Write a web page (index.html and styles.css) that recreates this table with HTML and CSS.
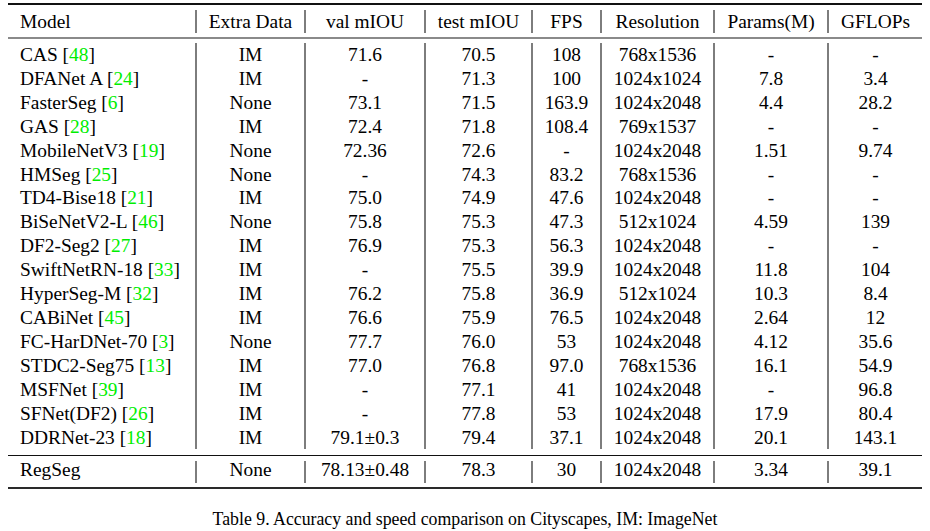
FILE: index.html
```html
<!DOCTYPE html>
<html>
<head>
<meta charset="utf-8">
<title>Table 9</title>
<link rel="stylesheet" href="styles.css">
</head>
<body>
<div class="page">
  <div class="table">
    <div class="rule-top"></div>
    <div class="section head">
      <div class="row">
        <div class="c">Model</div><div class="c">Extra Data</div><div class="c">val mIOU</div><div class="c">test mIOU</div><div class="c">FPS</div><div class="c">Resolution</div><div class="c">Params(M)</div><div class="c">GFLOPs</div>
      </div>
    </div>
    <div class="rule-head"></div>
    <div class="section body">
      <div class="row"><div class="c">CAS [<span class="cite">48</span>]</div><div class="c">IM</div><div class="c">71.6</div><div class="c">70.5</div><div class="c">108</div><div class="c">768x1536</div><div class="c">-</div><div class="c">-</div></div>
      <div class="row"><div class="c">DFANet A [<span class="cite">24</span>]</div><div class="c">IM</div><div class="c">-</div><div class="c">71.3</div><div class="c">100</div><div class="c">1024x1024</div><div class="c">7.8</div><div class="c">3.4</div></div>
      <div class="row"><div class="c">FasterSeg [<span class="cite">6</span>]</div><div class="c">None</div><div class="c">73.1</div><div class="c">71.5</div><div class="c">163.9</div><div class="c">1024x2048</div><div class="c">4.4</div><div class="c">28.2</div></div>
      <div class="row"><div class="c">GAS [<span class="cite">28</span>]</div><div class="c">IM</div><div class="c">72.4</div><div class="c">71.8</div><div class="c">108.4</div><div class="c">769x1537</div><div class="c">-</div><div class="c">-</div></div>
      <div class="row"><div class="c">MobileNetV3 [<span class="cite">19</span>]</div><div class="c">None</div><div class="c">72.36</div><div class="c">72.6</div><div class="c">-</div><div class="c">1024x2048</div><div class="c">1.51</div><div class="c">9.74</div></div>
      <div class="row"><div class="c">HMSeg [<span class="cite">25</span>]</div><div class="c">None</div><div class="c">-</div><div class="c">74.3</div><div class="c">83.2</div><div class="c">768x1536</div><div class="c">-</div><div class="c">-</div></div>
      <div class="row"><div class="c">TD4-Bise18 [<span class="cite">21</span>]</div><div class="c">IM</div><div class="c">75.0</div><div class="c">74.9</div><div class="c">47.6</div><div class="c">1024x2048</div><div class="c">-</div><div class="c">-</div></div>
      <div class="row"><div class="c">BiSeNetV2-L [<span class="cite">46</span>]</div><div class="c">None</div><div class="c">75.8</div><div class="c">75.3</div><div class="c">47.3</div><div class="c">512x1024</div><div class="c">4.59</div><div class="c">139</div></div>
      <div class="row"><div class="c">DF2-Seg2 [<span class="cite">27</span>]</div><div class="c">IM</div><div class="c">76.9</div><div class="c">75.3</div><div class="c">56.3</div><div class="c">1024x2048</div><div class="c">-</div><div class="c">-</div></div>
      <div class="row"><div class="c">SwiftNetRN-18 [<span class="cite">33</span>]</div><div class="c">IM</div><div class="c">-</div><div class="c">75.5</div><div class="c">39.9</div><div class="c">1024x2048</div><div class="c">11.8</div><div class="c">104</div></div>
      <div class="row"><div class="c">HyperSeg-M [<span class="cite">32</span>]</div><div class="c">IM</div><div class="c">76.2</div><div class="c">75.8</div><div class="c">36.9</div><div class="c">512x1024</div><div class="c">10.3</div><div class="c">8.4</div></div>
      <div class="row"><div class="c">CABiNet [<span class="cite">45</span>]</div><div class="c">IM</div><div class="c">76.6</div><div class="c">75.9</div><div class="c">76.5</div><div class="c">1024x2048</div><div class="c">2.64</div><div class="c">12</div></div>
      <div class="row"><div class="c">FC-HarDNet-70 [<span class="cite">3</span>]</div><div class="c">None</div><div class="c">77.7</div><div class="c">76.0</div><div class="c">53</div><div class="c">1024x2048</div><div class="c">4.12</div><div class="c">35.6</div></div>
      <div class="row"><div class="c">STDC2-Seg75 [<span class="cite">13</span>]</div><div class="c">IM</div><div class="c">77.0</div><div class="c">76.8</div><div class="c">97.0</div><div class="c">768x1536</div><div class="c">16.1</div><div class="c">54.9</div></div>
      <div class="row"><div class="c">MSFNet [<span class="cite">39</span>]</div><div class="c">IM</div><div class="c">-</div><div class="c">77.1</div><div class="c">41</div><div class="c">1024x2048</div><div class="c">-</div><div class="c">96.8</div></div>
      <div class="row"><div class="c">SFNet(DF2) [<span class="cite">26</span>]</div><div class="c">IM</div><div class="c">-</div><div class="c">77.8</div><div class="c">53</div><div class="c">1024x2048</div><div class="c">17.9</div><div class="c">80.4</div></div>
      <div class="row"><div class="c">DDRNet-23 [<span class="cite">18</span>]</div><div class="c">IM</div><div class="c">79.1±0.3</div><div class="c">79.4</div><div class="c">37.1</div><div class="c">1024x2048</div><div class="c">20.1</div><div class="c">143.1</div></div>
    </div>
    <div class="rule-mid"></div>
    <div class="section foot">
      <div class="row"><div class="c">RegSeg</div><div class="c">None</div><div class="c">78.13±0.48</div><div class="c">78.3</div><div class="c">30</div><div class="c">1024x2048</div><div class="c">3.34</div><div class="c">39.1</div></div>
    </div>
    <div class="rule-bottom"></div>
  </div>
  <p class="caption">Table 9. Accuracy and speed comparison on Cityscapes, IM: ImageNet</p>
</div>
</body>
</html>
```

FILE: styles.css
```css
html, body {
  margin: 0;
  padding: 0;
  background: #ffffff;
}

.page {
  width: 930px;
  height: 531px;
  padding-top: 3px;
  box-sizing: border-box;
  font-family: "Liberation Serif", "Times New Roman", serif;
  color: #000000;
}

.table {
  margin-left: 8px;
  width: 914px;
  font-size: 19.4px;
}

.rule-top {
  height: 2px;
  background: #111111;
}

.rule-head {
  height: 2px;
  background: #8a8a8a;
}

.rule-mid {
  height: 1px;
  background: #111111;
}

.rule-bottom {
  height: 2px;
  background: #2a2a2a;
}

.row {
  display: grid;
  grid-template-columns: 187px 109px 120px 107px 69px 113px 114px 95px;
}

.c {
  text-align: center;
  white-space: nowrap;
  border-left: 2px solid #7d7d7d;
  box-sizing: border-box;
}

.c:first-child {
  border-left: none;
  text-align: left;
  padding-left: 12px;
}

.head {
  padding-top: 5px;
  padding-bottom: 4px;
}

.head .c {
  line-height: 23px;
}

.body {
  padding-top: 4px;
  padding-bottom: 5.7px;
}

.body .c {
  line-height: 23.9px;
}

.foot {
  padding-top: 5px;
  padding-bottom: 4px;
}

.foot .c {
  line-height: 17px;
  padding-bottom: 5px;
}

.cite {
  color: #00ee00;
}

.caption {
  margin: 20px 0 0 0;
  text-align: center;
  font-size: 17.8px;
  line-height: 20px;
}
```
